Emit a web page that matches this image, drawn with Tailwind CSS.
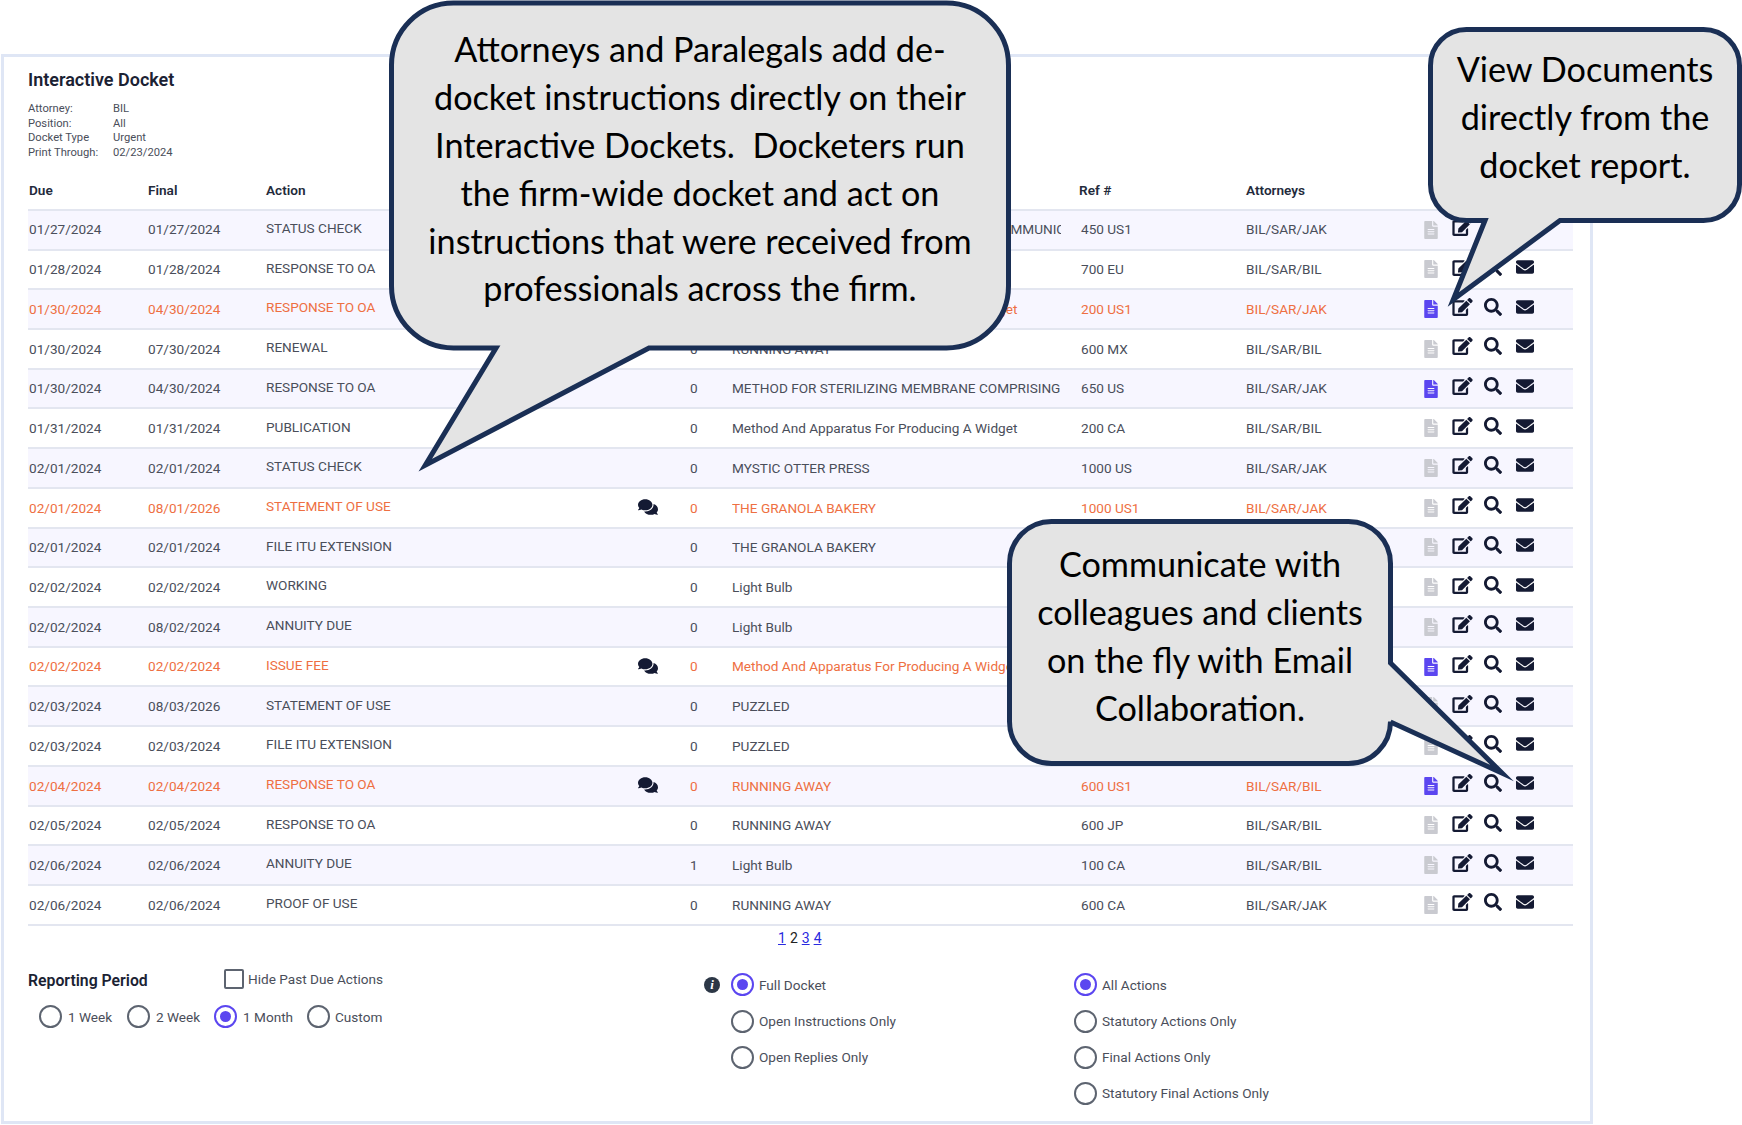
<!DOCTYPE html>
<html lang="en">
<head>
  <meta charset="UTF-8">
  <title>Interactive Docket</title>
  <script src="https://cdn.jsdelivr.net/npm/@tailwindcss/browser@4"></script>
</head>
<body class="bg-white font-['Roboto',sans-serif] text-[13.6px] text-[#4a4e5a]">
  <svg class="hidden">
    <symbol id="i-doc" viewBox="0 0 384 512"><path fill="currentColor" d="M224 136V0H24C10.7 0 0 10.7 0 24v464c0 13.3 10.7 24 24 24h336c13.3 0 24-10.7 24-24V160H248c-13.2 0-24-10.8-24-24zm64 236c0 6.6-5.4 12-12 12H108c-6.6 0-12-5.4-12-12v-8c0-6.6 5.4-12 12-12h168c6.6 0 12 5.4 12 12v8zm0-64c0 6.6-5.4 12-12 12H108c-6.6 0-12-5.4-12-12v-8c0-6.6 5.4-12 12-12h168c6.6 0 12 5.4 12 12v8zm0-72v8c0 6.6-5.4 12-12 12H108c-6.6 0-12-5.4-12-12v-8c0-6.6 5.4-12 12-12h168c6.6 0 12 5.4 12 12zm96-114.1v6.1H256V0h6.1c6.4 0 12.5 2.5 17 7l97.9 98c4.5 4.5 7 10.6 7 16.9z"/></symbol>
    <symbol id="i-edit" viewBox="0 0 576 512"><path fill="currentColor" d="M402.6 83.2l90.2 90.2c3.8 3.8 3.8 10 0 13.8L274.4 405.6l-92.8 10.3c-12.4 1.4-22.9-9.1-21.5-21.5l10.3-92.8L388.8 83.2c3.8-3.8 10-3.8 13.8 0zm162-22.9l-48.8-48.8c-15.2-15.2-39.9-15.2-55.2 0l-35.4 35.4c-3.8 3.8-3.8 10 0 13.8l90.2 90.2c3.8 3.8 10 3.8 13.8 0l35.4-35.4c15.2-15.3 15.2-40 0-55.2zM384 346.2V448H64V128h229.8c3.2 0 6.2-1.3 8.5-3.5l40-40c7.6-7.6 2.2-20.5-8.5-20.5H48C21.5 64 0 85.5 0 112v352c0 26.5 21.5 48 48 48h352c26.5 0 48-21.5 48-48V306.2c0-10.7-12.9-16-20.5-8.5l-40 40c-2.2 2.3-3.5 5.3-3.5 8.5z"/></symbol>
    <symbol id="i-search" viewBox="0 0 512 512"><path fill="currentColor" d="M505 442.7L405.3 343c-4.5-4.5-10.6-7-17-7H372c27.6-35.3 44-79.7 44-128C416 93.1 322.9 0 208 0S0 93.1 0 208s93.1 208 208 208c48.3 0 92.7-16.4 128-44v16.3c0 6.4 2.5 12.5 7 17l99.7 99.7c9.4 9.4 24.6 9.4 33.9 0l28.3-28.3c9.4-9.4 9.4-24.6.1-34zM208 336c-70.7 0-128-57.2-128-128 0-70.7 57.2-128 128-128 70.7 0 128 57.2 128 128 0 70.7-57.2 128-128 128z"/></symbol>
    <symbol id="i-mail" viewBox="0 64 512 384"><path fill="currentColor" d="M502.3 190.8c3.9-3.1 9.7-.2 9.7 4.7V400c0 26.5-21.5 48-48 48H48c-26.5 0-48-21.5-48-48V195.6c0-5 5.7-7.8 9.7-4.7 22.4 17.4 52.1 39.5 154.1 113.6 21.1 15.4 56.7 47.8 92.2 47.6 35.7.3 72-32.8 92.3-47.6 102-74.1 131.6-96.3 154-113.7zM256 320c23.2.4 56.6-29.2 73.4-41.4 132.7-96.3 142.8-104.7 173.4-128.7 5.8-4.5 9.2-11.5 9.2-18.9v-19c0-26.5-21.5-48-48-48H48C21.5 64 0 85.5 0 112v19c0 7.4 3.4 14.3 9.2 18.9 30.6 23.9 40.7 32.4 173.4 128.7 16.8 12.2 50.2 41.8 73.4 41.4z"/></symbol>
    <symbol id="i-chat" viewBox="0 32 576 448"><path fill="currentColor" d="M416 192c0-88.4-93.1-160-208-160S0 103.6 0 192c0 34.3 14.1 65.9 38 92-13.4 30.2-35.5 54.2-35.8 54.5-2.2 2.3-2.8 5.7-1.5 8.7S4.8 352 8 352c36.6 0 66.9-12.3 88.7-25 32.2 15.7 70.3 25 111.3 25 114.9 0 208-71.6 208-160zm122 220c23.9-26 38-57.7 38-92 0-66.9-53.5-124.2-129.3-148.1.9 6.6 1.3 13.3 1.3 20.1 0 105.9-107.7 192-240 192-10.8 0-21.3-.8-31.7-1.9C207.8 439.6 281.8 480 368 480c41 0 79.1-9.2 111.3-25 21.8 12.7 52.1 25 88.7 25 3.2 0 6.1-1.9 7.3-4.8 1.3-2.9.7-6.3-1.5-8.7-.3-.3-22.4-24.2-35.8-54.5z"/></symbol>
  </svg>

  <div class="relative h-[1125px] w-[1742px] overflow-hidden pt-[54px] pl-px">
    <!-- Docket panel -->
    <div class="h-[1070px] w-[1592px] border-[3px] border-[#dfe6f5] bg-white pl-[24px] pr-[17px] pt-[12px]">
      <h1 class="h-[22px] text-[18px] leading-[22px] font-semibold text-[#1b2233]">Interactive Docket</h1>
      <div class="mt-[11px] grid grid-cols-[85px_1fr] text-[11.2px] leading-[14.7px] text-[#4a4e5a]">
        <span>Attorney:</span><span>BIL</span>
        <span>Position:</span><span>All</span>
        <span>Docket Type</span><span>Urgent</span>
        <span>Print Through:</span><span>02/23/2024</span>
      </div>

      <div class="mt-[11px] grid h-[39px] grid-cols-[119px_118px_364px_35px_67px_347px_167px_178px_1fr] items-center border-b-2 border-[#e3e6f0] pl-px font-semibold text-[#232a3b]">
        <span>Due</span><span>Final</span><span>Action</span><span></span><span></span><span></span><span>Ref #</span><span class="col-start-8">Attorneys</span>
      </div>
      <div id="rows"></div>

      <div class="flex h-[26px] items-center gap-[4px] pl-[750px] text-[14px] text-[#222]">
        <a href="#" class="text-[#2a2ae0] underline">1</a><span>2</span><a href="#" class="text-[#2a2ae0] underline">3</a><a href="#" class="text-[#2a2ae0] underline">4</a>
      </div>

      <!-- Filters -->
      <div class="mt-[16px] flex">
        <div class="flex w-[676px] flex-col gap-[13px]">
          <div class="flex h-[24px] items-center">
            <span class="mt-[2px] w-[196px] text-[15.8px] font-semibold text-[#1b2233]">Reporting Period</span>
            <span class="mb-[2px] h-[20px] w-[20px] rounded-[2px] border-2 border-[#5d6470]"></span>
            <span class="mb-[2px] ml-[4px]">Hide Past Due Actions</span>
          </div>
          <div class="flex h-[24px] items-center pl-[11px]">
            <label class="flex w-[88px] items-center gap-[6px]"><span class="h-[23px] w-[23px] rounded-full border-[2.5px] border-[#5d6470]"></span>1 Week</label>
            <label class="flex w-[87px] items-center gap-[6px]"><span class="h-[23px] w-[23px] rounded-full border-[2.5px] border-[#5d6470]"></span>2 Week</label>
            <label class="flex w-[93px] items-center gap-[6px]"><span class="flex h-[23px] w-[23px] items-center justify-center rounded-full border-[2.5px] border-[#5b46f0]"><span class="h-[11px] w-[11px] rounded-full bg-[#5b46f0]"></span></span>1 Month</label>
            <label class="flex items-center gap-[5px]"><span class="h-[23px] w-[23px] rounded-full border-[2.5px] border-[#5d6470]"></span>Custom</label>
          </div>
        </div>

        <div class="flex w-[370px] pt-[5px]">
          <span class="mt-[4px] flex h-[16px] w-[16px] items-center justify-center rounded-full bg-[#2c3746] font-['Liberation_Serif',serif] text-[13px] font-bold text-white italic">i</span>
          <div class="ml-[11px] flex flex-col gap-[12.3px]">
            <label class="flex h-[24px] items-center gap-[5px]"><span class="flex h-[23px] w-[23px] items-center justify-center rounded-full border-[2.5px] border-[#5b46f0]"><span class="h-[11px] w-[11px] rounded-full bg-[#5b46f0]"></span></span>Full Docket</label>
            <label class="flex h-[24px] items-center gap-[5px]"><span class="h-[23px] w-[23px] rounded-full border-[2.5px] border-[#5d6470]"></span>Open Instructions Only</label>
            <label class="flex h-[24px] items-center gap-[5px]"><span class="h-[23px] w-[23px] rounded-full border-[2.5px] border-[#5d6470]"></span>Open Replies Only</label>
          </div>
        </div>

        <div class="flex flex-col gap-[12.3px] pt-[5px]">
          <label class="flex h-[24px] items-center gap-[5px]"><span class="flex h-[23px] w-[23px] items-center justify-center rounded-full border-[2.5px] border-[#5b46f0]"><span class="h-[11px] w-[11px] rounded-full bg-[#5b46f0]"></span></span>All Actions</label>
          <label class="flex h-[24px] items-center gap-[5px]"><span class="h-[23px] w-[23px] rounded-full border-[2.5px] border-[#5d6470]"></span>Statutory Actions Only</label>
          <label class="flex h-[24px] items-center gap-[5px]"><span class="h-[23px] w-[23px] rounded-full border-[2.5px] border-[#5d6470]"></span>Final Actions Only</label>
          <label class="flex h-[24px] items-center gap-[5px]"><span class="h-[23px] w-[23px] rounded-full border-[2.5px] border-[#5d6470]"></span>Statutory Final Actions Only</label>
        </div>
      </div>
    </div>

    <!-- Callouts drawn over the report -->
    <svg class="absolute inset-0 h-[1125px] w-[1742px] font-['Lato',sans-serif] text-[34.2px]" viewBox="0 0 1742 1125" text-anchor="middle">
      <g fill="#e4e4e4" stroke="#1a2f55" stroke-width="5" stroke-miterlimit="12">
        <path d="M453.5 3H946.5A62 62 0 0 1 1008.5 65V286A62 62 0 0 1 946.5 348H649L425.3 465.2L496 348H453.5A62 62 0 0 1 391.5 286V65A62 62 0 0 1 453.5 3Z"/>
        <path d="M1466.5 29.5H1703.5A36 36 0 0 1 1739.5 65.5V184.5A36 36 0 0 1 1703.5 220.5H1560L1453.3 299.5L1485 220.5H1466.5A36 36 0 0 1 1430.5 184.5V65.5A36 36 0 0 1 1466.5 29.5Z"/>
        <path d="M1051.5 521.5H1348.5A42 42 0 0 1 1390.5 563.5V663L1502 773L1390.5 722V721.5A42 42 0 0 1 1348.5 763.5H1051.5A42 42 0 0 1 1009.5 721.5V563.5A42 42 0 0 1 1051.5 521.5Z"/>
      </g>
      <g fill="#000">
        <text x="700" y="62">Attorneys and Paralegals add de-</text>
        <text x="700" y="110">docket instructions directly on their</text>
        <text x="700" y="158">Interactive Dockets.&#160; Docketers run</text>
        <text x="700" y="206">the firm-wide docket and act on</text>
        <text x="700" y="254">instructions that were received from</text>
        <text x="700" y="301">professionals across the firm.</text>
        <text x="1585" y="82">View Documents</text>
        <text x="1585" y="130">directly from the</text>
        <text x="1585" y="178">docket report.</text>
        <text x="1200" y="577">Communicate with</text>
        <text x="1200" y="625">colleagues and clients</text>
        <text x="1200" y="673">on the fly with Email</text>
        <text x="1200" y="721">Collaboration.</text>
      </g>
    </svg>
  </div>

  <script>
    // due, final, action, note, count, title, ref, attorneys, urgent, doc
    const rows = [
      ['01/27/2024', '01/27/2024', 'STATUS CHECK', 0, 0, 'WIRELESS MOBILE DEVICES FOR REMOTE COMMUNICATION', '450 US1', 'BIL/SAR/JAK', 0, 0],
      ['01/28/2024', '01/28/2024', 'RESPONSE TO OA', 0, 0, 'RUNNING AWAY', '700 EU', 'BIL/SAR/BIL', 0, 0],
      ['01/30/2024', '04/30/2024', 'RESPONSE TO OA', 0, 0, 'Method And Apparatus For Producing A Widget', '200 US1', 'BIL/SAR/JAK', 1, 1],
      ['01/30/2024', '07/30/2024', 'RENEWAL', 0, 0, 'RUNNING AWAY', '600 MX', 'BIL/SAR/BIL', 0, 0],
      ['01/30/2024', '04/30/2024', 'RESPONSE TO OA', 0, 0, 'METHOD FOR STERILIZING MEMBRANE COMPRISING', '650 US', 'BIL/SAR/JAK', 0, 1],
      ['01/31/2024', '01/31/2024', 'PUBLICATION', 0, 0, 'Method And Apparatus For Producing A Widget', '200 CA', 'BIL/SAR/BIL', 0, 0],
      ['02/01/2024', '02/01/2024', 'STATUS CHECK', 0, 0, 'MYSTIC OTTER PRESS', '1000 US', 'BIL/SAR/JAK', 0, 0],
      ['02/01/2024', '08/01/2026', 'STATEMENT OF USE', 1, 0, 'THE GRANOLA BAKERY', '1000 US1', 'BIL/SAR/JAK', 1, 0],
      ['02/01/2024', '02/01/2024', 'FILE ITU EXTENSION', 0, 0, 'THE GRANOLA BAKERY', '1000 US', 'BIL/SAR/JAK', 0, 0],
      ['02/02/2024', '02/02/2024', 'WORKING', 0, 0, 'Light Bulb', '100 US', 'BIL/SAR/BIL', 0, 0],
      ['02/02/2024', '08/02/2024', 'ANNUITY DUE', 0, 0, 'Light Bulb', '100 EU', 'BIL/SAR/BIL', 0, 0],
      ['02/02/2024', '02/02/2024', 'ISSUE FEE', 1, 0, 'Method And Apparatus For Producing A Widget', '200 US', 'BIL/SAR/BIL', 1, 1],
      ['02/03/2024', '08/03/2026', 'STATEMENT OF USE', 0, 0, 'PUZZLED', '800 US', 'BIL/SAR/JAK', 0, 0],
      ['02/03/2024', '02/03/2024', 'FILE ITU EXTENSION', 0, 0, 'PUZZLED', '800 US1', 'BIL/SAR/JAK', 0, 0],
      ['02/04/2024', '02/04/2024', 'RESPONSE TO OA', 1, 0, 'RUNNING AWAY', '600 US1', 'BIL/SAR/BIL', 1, 1],
      ['02/05/2024', '02/05/2024', 'RESPONSE TO OA', 0, 0, 'RUNNING AWAY', '600 JP', 'BIL/SAR/BIL', 0, 0],
      ['02/06/2024', '02/06/2024', 'ANNUITY DUE', 0, 1, 'Light Bulb', '100 CA', 'BIL/SAR/BIL', 0, 0],
      ['02/06/2024', '02/06/2024', 'PROOF OF USE', 0, 0, 'RUNNING AWAY', '600 CA', 'BIL/SAR/JAK', 0, 0],
    ];

    document.getElementById('rows').innerHTML = rows.map((r, i) => `
      <div class="grid h-[39.72px] grid-cols-[119px_118px_364px_35px_67px_349px_165px_178px_1fr] items-center border-b-2 border-[#e3e6f0] pl-px ${i % 2 == 0 ? 'bg-[#f7f6ff]' : 'bg-white'} ${r[8] ? 'text-[#ee6f42]' : ''}">
        <span>${r[0]}</span>
        <span>${r[1]}</span>
        <span class="mb-[3px]">${r[2]}</span>
        <span class="flex justify-center">${r[3] ? '<svg class="mb-[2px] h-[16px] w-[20px] text-[#141a33]"><use href="#i-chat"/></svg>' : ''}</span>
        <span class="pl-[25px]">${r[4]}</span>
        <span class="w-[329px] overflow-hidden whitespace-nowrap">${r[5]}</span>
        <span>${r[6]}</span>
        <span>${r[7]}</span>
        <span class="flex items-center">
          <svg class="h-[18px] w-[14px] ${r[9] ? 'text-[#5b46f0]' : 'text-[#c9cad0]'}"><use href="#i-doc"/></svg>
          <span class="mb-[5px] ml-[14px] flex items-center text-[#141a33]">
            <svg class="h-[18px] w-[21px]"><use href="#i-edit"/></svg>
            <svg class="ml-[11px] h-[18px] w-[18px]"><use href="#i-search"/></svg>
            <svg class="ml-[14px] h-[14px] w-[18px]"><use href="#i-mail"/></svg>
          </span>
        </span>
      </div>`).join('');
  </script>
</body>
</html>
